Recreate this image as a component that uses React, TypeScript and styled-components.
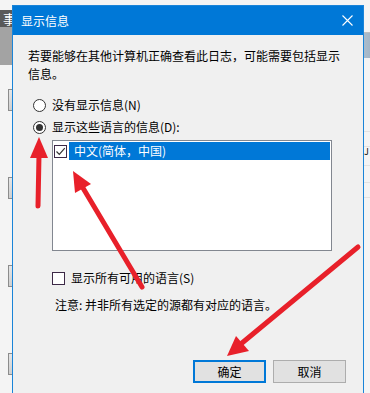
import styled, { createGlobalStyle } from 'styled-components';

const GlobalStyle = createGlobalStyle`
  html, body {
    margin: 0;
    padding: 0;
  }
  body {
    font-family: "Noto Sans CJK SC", "Noto Sans", sans-serif;
    font-size: 12px;
    color: #000;
  }
`;

const Page = styled.div`
  position: relative;
  width: 370px;
  height: 393px;
  overflow: hidden;
  background: #f4f4f4;
`;

// window behind the dialog
const Backdrop = styled.div`
  display: flex;
  justify-content: space-between;
  height: 100%;
`;

const LeftPane = styled.div`
  display: flex;
  flex-direction: column;
  width: 60px;
  padding-top: 10px;
`;

const DarkBand = styled.div`
  height: 17px;
  background: #595959;
  color: #fff;
  font-size: 13px;
  line-height: 17px;
  padding-left: 3px;
  white-space: nowrap;
  overflow: hidden;
`;

const GrayBand = styled.div`
  height: 38px;
  background: #a3a3a3;
`;

const Handles = styled.div`
  display: flex;
  flex-direction: column;
  gap: 66px;
  padding: 24px 0 0 8px;
`;

const Handle = styled.div`
  width: 10px;
  height: 22px;
  box-sizing: border-box;
  border: 1px solid #8c8c8c;
  background: linear-gradient(#e6e6e6, #cfcfcf);
`;

const RightPane = styled.div`
  display: flex;
  flex-direction: column;
  width: 40px;
  padding-top: 32px;
`;

const BlueBand = styled.div`
  height: 25px;
  border-top: 1px solid #bfbfbf;
  background: linear-gradient(90deg, #a6bccf, #b7c6d4 60%, #a3b6c7);
`;

const GridLine = styled.div<{ $gap: number }>`
  margin-top: ${(p) => p.$gap}px;
  border-top: 1px solid #e2e2e2;
  font-size: 9px;
  line-height: 10px;
  color: #111;
  padding-left: 34px;
`;

// dialog
const Dialog = styled.div`
  position: absolute;
  left: 12px;
  top: 5px;
  width: 352px;
  height: 400px;
  box-sizing: border-box;
  border: 1px solid #1a84d8;
  background: #f0f0f0;
  display: flex;
  flex-direction: column;
`;

const TitleBar = styled.div`
  display: flex;
  align-items: center;
  justify-content: space-between;
  height: 29px;
  padding: 0 10px 0 8px;
  background: #0078d7;
  color: #fff;
  font-size: 12px;
`;

const CloseIcon = () => (
  <svg width="11" height="11" viewBox="0 0 11 11">
    <path d="M0.5 0.5L10.5 10.5M10.5 0.5L0.5 10.5" stroke="#fff" strokeWidth="1.1" />
  </svg>
);

const Body = styled.div`
  display: flex;
  flex-direction: column;
  padding: 12px 15px 0 15px;
`;

const Intro = styled.p`
  margin: 0;
  width: 318px;
  line-height: 18px;
`;

const OptionRow = styled.label<{ $indent?: number; $top?: number }>`
  display: flex;
  align-items: center;
  gap: 6px;
  height: 22px;
  margin-left: ${(p) => p.$indent ?? 0}px;
  margin-top: ${(p) => p.$top ?? 0}px;
  line-height: 22px;
`;

const Radio = styled.span<{ $checked?: boolean }>`
  display: flex;
  align-items: center;
  justify-content: center;
  width: 13px;
  height: 13px;
  box-sizing: border-box;
  border: 1px solid #333;
  border-radius: 50%;
  background: #fff;

  &::after {
    content: '';
    display: ${(p) => (p.$checked ? 'block' : 'none')};
    width: 7px;
    height: 7px;
    border-radius: 50%;
    background: #333;
  }
`;

const Box = styled.span`
  display: flex;
  align-items: center;
  justify-content: center;
  flex: none;
  width: 13px;
  height: 13px;
  box-sizing: border-box;
  border: 1px solid #3d2947;
  background: #fff;
`;

const CheckMark = () => (
  <svg width="11" height="11" viewBox="0 0 11 11">
    <path d="M1.5 5.5L4.3 8.3L9.8 2.2" stroke="#333" strokeWidth="1.2" fill="none" />
  </svg>
);

const ListBox = styled.div`
  width: 280px;
  height: 111px;
  margin: 2px 0 0 24px;
  box-sizing: border-box;
  border: 1px solid #828790;
  background: #fff;
  padding: 1px 1px 0 1px;
`;

const ListItem = styled.div`
  display: flex;
  align-items: center;
  gap: 2px;
  height: 18px;
`;

const Selected = styled.span`
  flex: 1;
  height: 18px;
  line-height: 18px;
  padding-left: 5px;
  background: #0078d7;
  color: #fff;
`;

const Note = styled.div`
  margin: 7px 0 0 27px;
  line-height: 18px;
`;

const ButtonRow = styled.div`
  display: flex;
  justify-content: flex-end;
  gap: 7px;
  margin-top: 46px;
  padding-right: 2px;
`;

const Button = styled.button<{ $primary?: boolean }>`
  width: 73px;
  height: 23px;
  box-sizing: border-box;
  padding: 0;
  border: ${(p) => (p.$primary ? '2px solid #0078d7' : '1px solid #adadad')};
  background: #e1e1e1;
  font-family: inherit;
  font-size: 12px;
  color: #000;
`;

const Arrows = styled.svg`
  position: absolute;
  left: 0;
  top: 0;
  pointer-events: none;
`;

const RED = '#e8202a';

export default function App(): JSX.Element {
  return (
    <>
      <GlobalStyle />
      <Page>
        <Backdrop>
          <LeftPane>
            <DarkBand>事件查看器</DarkBand>
            <GrayBand />
            <Handles>
              <Handle />
              <Handle />
              <Handle />
              <Handle />
            </Handles>
          </LeftPane>
          <RightPane>
            <BlueBand />
            <GridLine $gap={73} />
            <GridLine $gap={14}>J·</GridLine>
            <GridLine $gap={8} />
            <GridLine $gap={16} />
            <GridLine $gap={14} />
          </RightPane>
        </Backdrop>

        <Dialog>
          <TitleBar>
            <span>显示信息</span>
            <CloseIcon />
          </TitleBar>
          <Body>
            <Intro>若要能够在其他计算机正确查看此日志，可能需要包括显示信息。</Intro>
            <OptionRow $indent={5} $top={11}>
              <Radio />
              <span>没有显示信息(N)</span>
            </OptionRow>
            <OptionRow $indent={5}>
              <Radio $checked />
              <span>显示这些语言的信息(D):</span>
            </OptionRow>
            <ListBox>
              <ListItem>
                <Box>
                  <CheckMark />
                </Box>
                <Selected>中文(简体，中国)</Selected>
              </ListItem>
            </ListBox>
            <OptionRow $indent={24} $top={16}>
              <Box />
              <span>显示所有可用的语言(S)</span>
            </OptionRow>
            <Note>注意: 并非所有选定的源都有对应的语言。</Note>
            <ButtonRow>
              <Button $primary>确定</Button>
              <Button>取消</Button>
            </ButtonRow>
          </Body>
        </Dialog>

        <Arrows width="370" height="393" viewBox="0 0 370 393">
          <line x1="38" y1="206" x2="39" y2="155" stroke={RED} strokeWidth="5" strokeLinecap="round" />
          <polygon points="39,137 30,158 48,158" fill={RED} />

          <line x1="142" y1="287" x2="83" y2="188" stroke={RED} strokeWidth="5" strokeLinecap="round" />
          <polygon points="73,171 91,184 75,193" fill={RED} />

          <line x1="358" y1="247" x2="242" y2="343" stroke={RED} strokeWidth="5" strokeLinecap="round" />
          <polygon points="227,356 236,336 249,351" fill={RED} />
        </Arrows>
      </Page>
    </>
  );
}
